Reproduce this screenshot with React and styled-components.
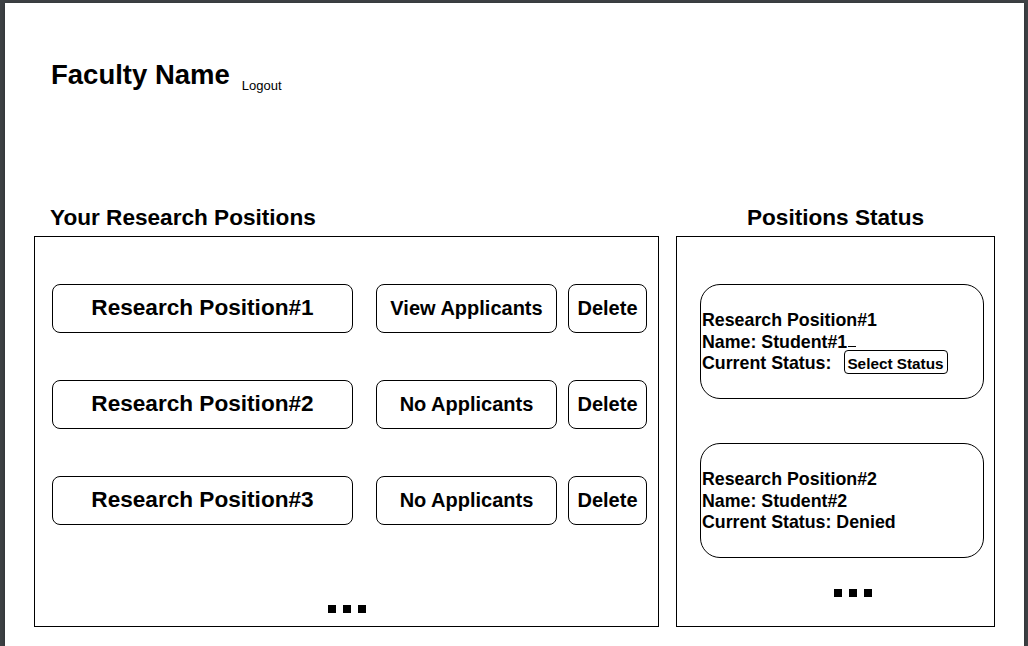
import React from "react";
import styled, { createGlobalStyle } from "styled-components";

const positions = [
  { title: "Research Position#1", applicants: 3 },
  { title: "Research Position#2", applicants: 0 },
  { title: "Research Position#3", applicants: 0 },
];

const statuses = [
  { position: "Research Position#1", student: "Student#1", status: null },
  { position: "Research Position#2", student: "Student#2", status: "Denied" },
];

export default function App() {
  return (
    <>
      <GlobalStyle />
      <Page>
        <Header>
          <FacultyName>Faculty Name</FacultyName>
          <Logout>Logout</Logout>
        </Header>

        <Main>
          <Column>
            <SectionTitle>Your Research Positions</SectionTitle>
            <PositionsPanel>
              <RowList>
                {positions.map((p) => (
                  <Row key={p.title}>
                    <Box $width={301} $size={22.6} $pb={2}>
                      {p.title}
                    </Box>
                    <Box $width={181} $size={20}>
                      {p.applicants > 0 ? "View Applicants" : "No Applicants"}
                    </Box>
                    <Box $width={79} $size={20}>
                      Delete
                    </Box>
                  </Row>
                ))}
              </RowList>
              <Dots $center>
                <Dot />
                <Dot />
                <Dot />
              </Dots>
            </PositionsPanel>
          </Column>

          <Column>
            <SectionTitle $center>Positions Status</SectionTitle>
            <StatusPanel>
              {statuses.map((s) => (
                <StatusCard key={s.position}>
                  <CardLine>{s.position}</CardLine>
                  <CardLine>
                    Name: {s.student}
                    {!s.status && <Trail />}
                  </CardLine>
                  <CardLine>
                    Current Status:
                    {s.status ? ` ${s.status}` : <SelectStatus>Select Status</SelectStatus>}
                  </CardLine>
                </StatusCard>
              ))}
              <Dots $offset={134}>
                <Dot />
                <Dot />
                <Dot />
              </Dots>
            </StatusPanel>
          </Column>
        </Main>
      </Page>
    </>
  );
}

const GlobalStyle = createGlobalStyle`
  html, body {
    margin: 0;
    padding: 0;
    background: #3e4245;
  }
  body {
    font-family: "Liberation Sans", Arial, sans-serif;
    color: #000;
  }
`;

const Page = styled.div`
  margin: 3px 4px 0 5px;
  min-height: calc(100vh - 3px);
  box-sizing: border-box;
  background: #fff;
  padding-top: 56px;
  box-shadow: 0 1px 4px rgba(0, 0, 0, 0.35);
`;

const Header = styled.div`
  display: flex;
  align-items: flex-start;
  padding-left: 46px;
`;

const FacultyName = styled.h1`
  margin: 0;
  font-size: 27.5px;
  line-height: 32px;
  font-weight: 700;
`;

const Logout = styled.span`
  margin: 19px 0 0 12px;
  font-size: 13px;
  line-height: 15px;
`;

const Main = styled.div`
  display: grid;
  grid-template-columns: 625px 319px;
  column-gap: 17px;
  margin: 112px 0 0 29px;
`;

const Column = styled.section`
  display: flex;
  flex-direction: column;
`;

const SectionTitle = styled.h2`
  margin: 0 0 5px;
  padding-left: ${(p) => (p.$center ? 0 : 16)}px;
  text-align: ${(p) => (p.$center ? "center" : "left")};
  font-size: 22.6px;
  line-height: 26px;
  font-weight: 700;
`;

const PositionsPanel = styled.div`
  height: 391px;
  box-sizing: border-box;
  border: 1px solid #000;
  padding: 47px 11px 13px 17px;
  display: flex;
  flex-direction: column;
`;

const RowList = styled.div`
  display: flex;
  flex-direction: column;
  gap: 47px;
`;

const Row = styled.div`
  display: flex;
  & > :nth-child(2) {
    margin-left: 23px;
  }
  & > :nth-child(3) {
    margin-left: 11px;
  }
`;

const Box = styled.div`
  width: ${(p) => p.$width}px;
  height: 49px;
  box-sizing: border-box;
  padding-bottom: ${(p) => p.$pb || 0}px;
  border: 1px solid #000;
  border-radius: 8px;
  display: flex;
  align-items: center;
  justify-content: center;
  font-size: ${(p) => p.$size}px;
  font-weight: 700;
  white-space: nowrap;
`;

const Dots = styled.div`
  display: flex;
  gap: 7px;
  justify-content: ${(p) => (p.$center ? "center" : "flex-start")};
  padding-left: ${(p) => p.$offset || 0}px;
  padding-right: ${(p) => (p.$center ? 6 : 0)}px;
  margin-top: ${(p) => (p.$center ? "auto" : "31px")};
`;

const Dot = styled.span`
  width: 8px;
  height: 8px;
  background: #000;
`;

const StatusPanel = styled.div`
  height: 391px;
  box-sizing: border-box;
  border: 1px solid #000;
  padding: 47px 10px 0 23px;
  display: flex;
  flex-direction: column;
  & > div + div {
    margin-top: 44px;
  }
  & > div:last-child {
    margin-top: 31px;
  }
`;

const StatusCard = styled.div`
  height: 115px;
  box-sizing: border-box;
  border: 1px solid #000;
  border-radius: 20px;
  padding: 25px 4px 0 1px;
`;

const CardLine = styled.div`
  font-size: 17.8px;
  line-height: 21.6px;
  height: 21.6px;
  font-weight: 700;
  white-space: nowrap;
`;

const Trail = styled.span`
  display: inline-block;
  width: 8px;
  height: 1px;
  margin-left: 1px;
  background: #000;
  vertical-align: 1px;
`;

const SelectStatus = styled.span`
  display: inline-block;
  margin: -6px 0 -6px 13px;
  padding: 5px 3px 2px 2px;
  border: 1px solid #000;
  border-radius: 4px;
  font-size: 15.3px;
  line-height: 15px;
  font-weight: 700;
`;
